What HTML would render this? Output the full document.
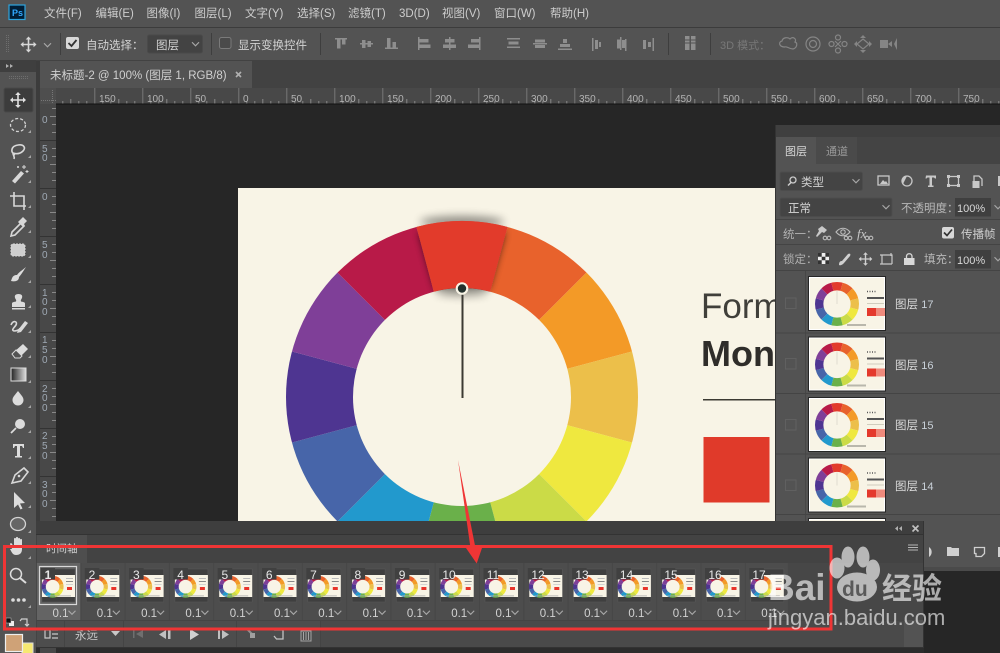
<!DOCTYPE html>
<html><head><meta charset="utf-8"><title>PS</title>
<style>
html,body{margin:0;padding:0;background:#262626;width:1000px;height:653px;overflow:hidden}
svg{display:block;filter:blur(.35px)}
text{font-family:"Liberation Sans","Noto Sans CJK SC",sans-serif}
.m{font-size:11.5px;fill:#cdcdcd}
.r{font-size:10px;fill:#b4b4b4}
.v{font-size:10px;fill:#9fa9b4}
.o{font-size:11.5px;fill:#d2d2d2}
.n{font-size:12px;fill:#e8e8e8}
.d{font-size:11.5px;fill:#d2d2d2}
.l{font-size:11.5px;fill:#d8d8d8}
.i{fill:none;stroke:#a8a8a8;stroke-width:1.4}
.g{fill:#8e8e8e}
.t{fill:none;stroke:#d8d8d8;stroke-width:1.6}
.f{fill:#d8d8d8}
</style></head><body>
<svg width="1000" height="653" viewBox="0 0 1000 653" xmlns="http://www.w3.org/2000/svg">
<defs>
<clipPath id="c176"><circle r="176"/></clipPath>
<filter id="b5" x="-40%" y="-40%" width="180%" height="180%"><feGaussianBlur stdDeviation="4"/></filter>
<filter id="b6" x="-50%" y="-300%" width="200%" height="700%"><feGaussianBlur stdDeviation="4.5"/></filter>
<pattern id="hr" patternUnits="userSpaceOnUse" x="46.3" y="88" width="48" height="16">
<path d="M.5 0V16" stroke="#777" fill="none"/>
<path d="M8.5 13V16M16.5 13V16M24.5 11V16M32.5 13V16M40.5 13V16" stroke="#888" fill="none"/>
</pattern>
<pattern id="vr" patternUnits="userSpaceOnUse" x="40" y="92" width="16" height="48">
<path d="M0 .5H16" stroke="#333" fill="none"/>
<path d="M12 8.5H16M12 16.5H16M10 24.5H16M12 32.5H16M12 40.5H16" stroke="#888" fill="none"/>
</pattern>
<g id="w">
<g clip-path="url(#c176)">
<path d="M0 0L-51.76-193.19H51.76z" fill="#e23b2b"/>
<path d="M0 0L51.76-193.19L141.42-141.42z" fill="#e8622c"/>
<path d="M0 0L141.42-141.42L193.19-51.76z" fill="#f39a27"/>
<path d="M0 0L193.19-51.76V51.76z" fill="#ecbf4a"/>
<path d="M0 0L193.19 51.76L141.42 141.42z" fill="#efe83f"/>
<path d="M0 0L141.42 141.42L51.76 193.19z" fill="#cbdb47"/>
<path d="M0 0L51.76 193.19H-51.76z" fill="#6ab04a"/>
<path d="M0 0L-51.76 193.19L-141.42 141.42z" fill="#2299cd"/>
<path d="M0 0L-141.42 141.42L-193.19 51.76z" fill="#4765a9"/>
<path d="M0 0L-193.19 51.76V-51.76z" fill="#4e3591"/>
<path d="M0 0L-193.19-51.76L-141.42-141.42z" fill="#7f3f98"/>
<path d="M0 0L-141.42-141.42L-51.76-193.19z" fill="#b81a48"/>
</g>
<circle r="109" fill="#f8f4e6"/>
</g>
<g id="fr">
<rect x="5" y="6" width="33" height="33" fill="#3f3f3f" stroke="#565656" stroke-width=".6"/>
<rect x="5" y="12" width="33" height="22" fill="#f8f4e6"/>
<use href="#w" transform="translate(15.6 23.7) scale(.0625)"/>
<rect x="29" y="15" width="7" height="1" fill="#bbb"/>
<rect x="29" y="18" width="7" height="1" fill="#888"/>
<rect x="29" y="21" width="7" height=".8" fill="#ccc"/>
<rect x="30" y="24" width="5" height="3" fill="#e8342a"/>
<rect x="10" y="32.5" width="24" height=".8" fill="#aaa"/>
<rect x="3.500" y="5" width="14.500" height="11.500" fill="#404040"/>
</g>
<g id="lt">
<rect x="-1" y="-1" width="78" height="55" fill="#262626"/>
<rect width="76" height="53" fill="#fff"/>
<rect x="1" y="1" width="74" height="51" fill="#f8f4e6"/>
<use href="#w" transform="translate(28 27) scale(.125)"/>
<rect x="27.5" y="14" width="1" height="13" fill="#e0ddd0"/>
<path d="M58 14.500h1M60.500 14.500h1M63 14.500h1M65.500 14.500h1" stroke="#555" stroke-width="1.500" fill="none"/>
<rect x="58" y="20" width="17" height="2" fill="#555"/>
<rect x="58" y="26" width="17" height="1" fill="#d0cdbd"/>
<rect x="58" y="31" width="9" height="8" fill="#e4392c"/>
<rect x="67" y="31" width="9" height="8" fill="#ef8a7c"/>
<rect x="38" y="47" width="19" height="2" fill="#b9b7ac"/>
</g>
<path id="tri" d="M0 3l3-3v3z" fill="#a5a5a5"/>
<g id="mv"><path d="M0-8l-2.800 3h5.600zM0 8l-2.800-3h5.600zM-8 0l3-2.800v5.600zM8 0l-3-2.800v5.600z"/><path d="M-.8-6h1.600V6h-1.600zM-6-.8H6v1.600H-6z"/></g>
<path id="chev" d="M-3.500-1.800L0 1.800L3.500-1.800" fill="none" stroke="#a8a8a8" stroke-width="1.100"/>
<linearGradient id="gd" x1="0" x2="1"><stop offset="0" stop-color="#222"/><stop offset="1" stop-color="#ddd"/></linearGradient>
</defs>

<!-- base -->
<rect width="1000" height="653" fill="#262626"/>
<rect width="1000" height="27" fill="#535353"/>
<rect y="27" width="1000" height="1" fill="#3c3c3c"/>
<rect y="28" width="1000" height="32" fill="#535353"/>
<rect y="60" width="1000" height="28" fill="#424242"/>
<rect x="40" y="61" width="212" height="27" fill="#535353"/>
<rect x="40" y="88" width="960" height="16" fill="#484848"/>
<rect x="40" y="88" width="960" height="16" fill="url(#hr)"/>
<rect x="40" y="88" width="16" height="16" fill="#4e4e4e"/>
<path d="M52.500 90V103M41 100.500H56" stroke="#777" stroke-dasharray="1 1" fill="none"/>
<rect x="56" y="103.500" width="944" height="1" fill="#111"/>
<rect x="36" y="61" width="4" height="592" fill="#3c3c3c"/>
<rect x="40" y="104" width="16" height="549" fill="#484848"/>
<rect x="40" y="104" width="16" height="549" fill="url(#vr)"/>

<!-- left toolbar -->
<rect y="60" width="36" height="593" fill="#535353"/>
<rect y="60" width="36" height="12" fill="#3f3f3f"/>
<path d="M6 64v4l3-2zM10 64v4l3-2z" fill="#b0b0b0"/>
<path d="M9 76.500H28M9 78.500H28" stroke="#6e6e6e" stroke-dasharray="1 1" fill="none"/>

<!-- menu -->
<rect x="9" y="5" width="16" height="14.500" fill="#001e36" stroke="#2ea4de" stroke-width="1.200"/>
<text x="12" y="16" font-size="9" font-weight="bold" fill="#31a8ff">Ps</text>
<text class="m" x="44" y="17">文件(F)</text>
<text class="m" x="95.500" y="17">编辑(E)</text>
<text class="m" x="146.500" y="17">图像(I)</text>
<text class="m" x="194.500" y="17">图层(L)</text>
<text class="m" x="245" y="17">文字(Y)</text>
<text class="m" x="297" y="17">选择(S)</text>
<text class="m" x="348" y="17">滤镜(T)</text>
<text class="m" x="399" y="17">3D(D)</text>
<text class="m" x="442" y="17">视图(V)</text>
<text class="m" x="494" y="17">窗口(W)</text>
<text class="m" x="550" y="17">帮助(H)</text>

<!-- options bar -->
<path d="M6.500 35V53M8.500 35V53" stroke="#6e6e6e" stroke-dasharray="1 1" fill="none"/>
<use href="#mv" transform="translate(28.500 44.500)" fill="#d8d8d8"/>
<use href="#chev" transform="translate(47.500 45)"/>
<rect x="60" y="33" width="1" height="22" fill="#3e3e3e"/>
<rect x="66" y="37" width="13" height="12" rx="2" fill="#d8d8d8"/>
<path d="M68.500 43l3 3 5-6" fill="none" stroke="#333" stroke-width="1.800"/>
<text class="o" x="86" y="49">自动选择：</text>
<rect x="147.500" y="35" width="55" height="18" rx="2" fill="#434343" stroke="#4a4a4a"/>
<text class="o" x="156" y="49">图层</text>
<use href="#chev" transform="translate(195.500 44)"/>
<rect x="211" y="33" width="1" height="22" fill="#3e3e3e"/>
<rect x="219.500" y="37.500" width="11.500" height="11" rx="2" fill="#4a4a4a" stroke="#7a7a7a"/>
<text class="o" x="238" y="49">显示变换控件</text>
<rect x="320" y="33" width="1" height="22" fill="#3e3e3e"/>
<g class="g">
<path d="M335 38h12v1.500h-12zM337 39.500h3.500v9h-3.500zM342 39.500h3.500v5h-3.500z"/>
<path d="M360 43h13v1.500h-13zM362 40h3.500v8h-3.500zM367.500 41h3.500v6h-3.500z"/>
<path d="M385 49h13v-1.500h-13zM387 38h3.500v9.500h-3.500zM392.500 42h3.500v5.500h-3.500z"/>
<path d="M418 37h1.500v13h-1.500zM419.500 39h9v3.500h-9zM419.500 44.500h11v3.500h-11z"/>
<path d="M449 37h1.500v13h-1.500zM445 39h9.500v3.500h-9.500zM443 44.500h13v3.500h-13z"/>
<path d="M479 37h1.500v13h-1.500zM471 39h8v3.500h-8zM468 44.500h11v3.500h-11z"/>
<path d="M507 38h13v1.500h-13zM508.500 41.500h10v3h-10zM507 46.500h13v1.500h-13z"/>
<path d="M533 43h14v1.500h-14zM535 39.500h10v3h-10zM535 45h10v3h-10z"/>
<path d="M558 48.500h14v1.500h-14zM560 44h10v3h-10zM563 39h4v4h-4z"/>
<path d="M592 38h1.500v13h-1.500zM595 40h3v9h-3zM599 42h2v5h-2z"/>
<path d="M620 37h1.500v13h-1.500zM617 39.500h3v9h-3zM625 39h1.500v12h-1.500zM622 40h3v8h-3z"/>
<path d="M654 38h-1.500v13h1.500zM643 40h3v9h-3zM648 42h3v5h-3z"/>
</g>
<rect x="668" y="33" width="1" height="22" fill="#3e3e3e"/>
<path class="g" d="M685 36h4.500v14h-4.500zM691 36h4.500v14h-4.500z"/>
<path d="M685 40h10.500M685 43h10.500" stroke="#535353" fill="none"/>
<rect x="710" y="33" width="1" height="22" fill="#3e3e3e"/>
<text x="720" y="49" font-size="11" fill="#787878">3D 模式：</text>
<g fill="none" stroke="#858585" stroke-width="1.200">
<path d="M785 47c-6 0-7-5-3-6c1-4 6-4 8-2c3-3 7 0 5 3c3 1 2 6-2 7c-4 0-6-3-8-2"/>
<circle cx="813" cy="44" r="7"/><circle cx="813" cy="44" r="3.500"/>
<circle cx="838" cy="37.500" r="2.500"/><circle cx="838" cy="50.500" r="2.500"/><circle cx="831.500" cy="44" r="2.500"/><circle cx="844.500" cy="44" r="2.500"/><path d="M835 41l6 6M841 41l-6 6"/>
<path d="M863 39l6 5-6 5-6-5z"/>
</g>
<path d="M863 35l3 3h-6zM863 53l3-3h-6zM854 44l3-3v6zM872 44l-3-3v6z" fill="#858585"/>
<rect x="880" y="40" width="8" height="8" fill="#858585"/>
<path d="M888 44l4-3v6zM897 38l-3 6 3 6" fill="#858585"/>

<!-- tab -->
<text x="50" y="79" font-size="11.500" fill="#d0d0d0">未标题-2 @ 100% (图层 1, RGB/8)</text>
<path d="M236 72l5 5M241 72l-5 5" stroke="#b0b0b0" stroke-width="1.600" fill="none"/>

<!-- rulers text -->
<g class="r">
<text x="99" y="102">150</text><text x="147" y="102">100</text><text x="195" y="102">50</text><text x="243" y="102">0</text><text x="291" y="102">50</text><text x="339" y="102">100</text><text x="387" y="102">150</text><text x="435" y="102">200</text><text x="483" y="102">250</text><text x="531" y="102">300</text><text x="579" y="102">350</text><text x="627" y="102">400</text><text x="675" y="102">450</text><text x="723" y="102">500</text><text x="771" y="102">550</text><text x="819" y="102">600</text><text x="867" y="102">650</text><text x="915" y="102">700</text><text x="963" y="102">750</text>
</g>
<g class="v">
<text x="42" y="123">0</text>
<text x="42" y="152">5</text><text x="42" y="161">0</text>
<text x="42" y="200">0</text>
<text x="42" y="248">5</text><text x="42" y="258">0</text>
<text x="42" y="296">1</text><text x="42" y="305">0</text><text x="42" y="315">0</text>
<text x="42" y="343">1</text><text x="42" y="353">5</text><text x="42" y="363">0</text>
<text x="42" y="392">2</text><text x="42" y="401">0</text><text x="42" y="411">0</text>
<text x="42" y="439">2</text><text x="42" y="449">5</text><text x="42" y="459">0</text>
<text x="42" y="488">3</text><text x="42" y="497">0</text><text x="42" y="507">0</text>
<text x="42" y="656">0</text>
</g>

<!-- document -->
<rect x="238" y="188" width="538" height="334" fill="#f8f4e6"/>
<ellipse cx="462" cy="222" rx="42" ry="6" fill="#000" opacity=".42" filter="url(#b6)"/>
<g transform="translate(462 397)">
<use href="#w"/>
</g>
<ellipse cx="462" cy="292" rx="26" ry="4" fill="#000" opacity=".38" filter="url(#b6)"/>
<path d="M419 232L505 232L489 288L435 288z" fill="#000" opacity=".75" filter="url(#b5)"/>
<path d="M416.500 227A176 176 0 0 1 507.500 227L490.200 291.700A109 109 0 0 0 433.800 291.700z" fill="#e23b2b"/>
<rect x="461.500" y="290" width="2" height="108" fill="#3c3a33"/>
<circle cx="462" cy="288.500" r="6.300" fill="#f8f4e6"/>
<circle cx="462" cy="288.500" r="4.200" fill="#22302c"/>
<text x="701" y="318" font-size="35" fill="#403f3a">Form</text>
<text x="701" y="366" font-size="36" font-weight="bold" fill="#2f2d2a">Mon</text>
<rect x="703" y="399" width="73" height="1.500" fill="#3c3a33"/>
<rect x="703.500" y="437" width="66" height="65.500" fill="#e03a2a"/>

<!-- layers panel -->
<rect x="775" y="125" width="225" height="400" fill="#535353"/>
<rect x="775" y="125" width="1" height="400" fill="#333"/>
<rect x="776" y="125" width="224" height="12" fill="#3f3f3f"/>
<rect x="776" y="137" width="224" height="27" fill="#444"/>
<rect x="776" y="137" width="40" height="27" fill="#535353"/>
<rect x="816" y="137" width="41" height="27" fill="#4a4a4a"/>
<text x="785" y="155" font-size="11" fill="#d8d8d8">图层</text>
<text x="826" y="155" font-size="11" fill="#9a9a9a">通道</text>
<rect x="780" y="172" width="82.500" height="18.500" rx="2" fill="#444" stroke="#4c4c4c"/>
<circle cx="793" cy="180" r="3" fill="none" stroke="#ccc" stroke-width="1.300"/>
<path d="M791 182.500l-3 3" stroke="#ccc" stroke-width="1.500"/>
<text x="801" y="186" font-size="11.500" fill="#d2d2d2">类型</text>
<use href="#chev" transform="translate(856 181)"/>
<g fill="none" stroke="#c8c8c8" stroke-width="1.300">
<rect x="878" y="176" width="11" height="9"/>
<circle cx="907" cy="181" r="5"/>
<rect x="948.500" y="176.500" width="10" height="9"/>
<path d="M974 186v-10h5l3 3v7"/>
</g>
<path d="M880 184l3-4 2 2 1-1 2 3zM907 176a5 5 0 0 0-4 8zM926 175.500h10v3h-1l-1-1h-2v8h1.500v1.500h-5.500v-1.500h1.500v-8h-2l-1 1h-1z" fill="#c8c8c8"/>
<path d="M947 175h3v3h-3zM957 175h3v3h-3zM947 184h3v3h-3zM957 184h3v3h-3z" fill="#c8c8c8"/>
<rect x="972.500" y="181" width="7" height="7" fill="#c8c8c8"/>
<rect x="998" y="176" width="2" height="10" fill="#c8c8c8"/>

<rect x="780" y="198" width="112" height="18.500" rx="2" fill="#444" stroke="#4c4c4c"/>
<text x="788" y="212" font-size="11.500" fill="#d8d8d8">正常</text>
<use href="#chev" transform="translate(886 207)"/>
<text x="901" y="212" font-size="11.500" fill="#b8b8b8">不透明度：</text>
<rect x="955" y="198" width="36" height="18.500" fill="#3f3f3f"/>
<text x="957" y="212" font-size="11" fill="#d8d8d8">100%</text>
<use href="#chev" transform="translate(998 207)"/>
<rect x="776" y="219" width="224" height="1" fill="#444"/>

<text x="783" y="238" font-size="11.500" fill="#b0b0b0">统一：</text>
<path d="M816 236l3-5-1-2 4-3 5 4-3 3-2-1-5 5z" fill="#c8c8c8"/>
<g fill="none" stroke="#bcbcbc" stroke-width="1.100">
<circle cx="825" cy="238" r="1.800"/><circle cx="829" cy="238" r="1.800"/>
<path d="M836 232c4-5 10-5 14 0c-4 5-10 5-14 0z"/><circle cx="843" cy="232" r="2.200"/>
<circle cx="846" cy="238" r="1.800"/><circle cx="850" cy="238" r="1.800"/>
<circle cx="867" cy="238" r="1.800"/><circle cx="871" cy="238" r="1.800"/>
</g>
<text x="857" y="238" font-size="13" font-style="italic" style="font-family:'Liberation Serif',serif" fill="#c8c8c8">fx</text>
<rect x="942" y="227" width="12" height="11.500" rx="2" fill="#d8d8d8"/>
<path d="M944 232.500l3 3 5-6" fill="none" stroke="#333" stroke-width="1.700"/>
<text x="961" y="238" font-size="11.500" fill="#d0d0d0">传播帧</text>
<rect x="776" y="244" width="224" height="1" fill="#444"/>

<text x="783" y="263" font-size="11.500" fill="#b0b0b0">锁定：</text>
<rect x="818" y="253" width="11" height="11" fill="#eee"/>
<path d="M818 253h3.700v3.700h-3.700zM825.400 253h3.600v3.700h-3.600zM821.700 256.700h3.700v3.600h-3.700zM818 260.300h3.700v3.700h-3.700zM825.400 260.300h3.600v3.700h-3.600z" fill="#333"/>
<path d="M839 265c0-4 2-4 3-4l6-7c2-1 3 0 2 2l-6 7c-1 1-3 3-5 2z" fill="#d0d0d0"/>
<use href="#mv" transform="translate(865.500 259) scale(.85)" fill="#d0d0d0"/>
<path d="M882 255h10v9M882 255v9h10M880 255h3M880 264h3M891 253v3" fill="none" stroke="#c8c8c8" stroke-width="1.200"/>
<path d="M904 258h10.500v7h-10.500z" fill="#d8d8d8"/>
<path d="M906.500 258v-2a2.800 2.800 0 0 1 5.500 0v2" fill="none" stroke="#d8d8d8" stroke-width="1.300"/>
<text x="924" y="263" font-size="11.500" fill="#b8b8b8">填充：</text>
<rect x="955" y="250" width="36" height="18.500" fill="#3f3f3f"/>
<text x="957" y="264" font-size="11" fill="#d8d8d8">100%</text>
<use href="#chev" transform="translate(998 259)"/>
<rect x="776" y="270" width="224" height="1" fill="#444"/>

<path d="M805.500 271V525" stroke="#474747" fill="none"/>
<path d="M776 333h224M776 393.500h224M776 454h224M776 514.500h224" stroke="#444" fill="none"/>
<g fill="none" stroke="#606060">
<rect x="785.500" y="298" width="10.500" height="10.500"/>
<rect x="785.500" y="358.500" width="10.500" height="10.500"/>
<rect x="785.500" y="419.500" width="10.500" height="10.500"/>
<rect x="785.500" y="480" width="10.500" height="10.500"/>
</g>
<use href="#lt" transform="translate(809 277)"/>
<use href="#lt" transform="translate(809 337.500)"/>
<use href="#lt" transform="translate(809 398)"/>
<use href="#lt" transform="translate(809 458.500)"/>
<use href="#lt" transform="translate(809 519)"/>
<text class="l" x="895" y="308">图层 <tspan font-size="11" fill="#c8d0d8">17</tspan></text>
<text class="l" x="895" y="369">图层 <tspan font-size="11" fill="#c8d0d8">16</tspan></text>
<text class="l" x="895" y="429">图层 <tspan font-size="11" fill="#c8d0d8">15</tspan></text>
<text class="l" x="895" y="490">图层 <tspan font-size="11" fill="#c8d0d8">14</tspan></text>

<!-- layers bottom bar -->
<rect x="923" y="521" width="77" height="46" fill="#535353"/>
<rect x="923" y="567" width="77" height="4" fill="#4a4a4a"/>
<rect x="923" y="571" width="77" height="82" fill="#262626"/>
<path d="M923 556a6 6 0 0 0 7-9a6 6 0 0 1-7 9z" fill="#d0d0d0"/>
<path d="M929 547a6 6 0 0 1 0 10z" fill="#d0d0d0"/>
<path d="M947 547h4l1 1h7v8h-12z" fill="#d0d0d0"/>
<path d="M974.500 547.500h10v6l-3 3h-5.500v-3h-1.500z" fill="none" stroke="#d0d0d0" stroke-width="1.300"/>
<rect x="998" y="547" width="2" height="10" fill="#d0d0d0"/>

<!-- timeline panel -->
<rect x="36" y="521" width="887" height="126" fill="#4a4a4a"/>
<rect x="36" y="521" width="887" height="13" fill="#3e3e3e"/>
<rect x="36" y="534" width="887" height="1" fill="#333"/>
<rect x="36" y="535" width="887" height="28" fill="#434343"/>
<rect x="37" y="535" width="50" height="28" fill="#4e4e4e"/>
<rect x="923" y="521" width="1" height="126" fill="#333"/>
<rect x="36" y="647" width="888" height="1" fill="#333"/>
<rect x="36" y="648" width="888" height="5" fill="#2c2c2c"/>
<rect x="40" y="648" width="16" height="5" fill="#484848"/>
<path d="M898 526l-3 2.500 3 2.500zM902 526l-3 2.500 3 2.500z" fill="#b0b0b0"/>
<path d="M912.500 525.500l6 6M918.500 525.500l-6 6" stroke="#c0c0c0" stroke-width="1.600" fill="none"/>
<path d="M908 545h10M908 547.500h10M908 550h10" stroke="#b4b4b4" fill="none"/>
<text x="46" y="552" font-size="10.500" fill="#d0d0d0">时间轴</text>
<rect x="36" y="563" width="887" height="57" fill="#474747"/>

<!-- frames backgrounds -->
<g fill="#4d4d4d">
<rect x="81.300" y="563" width="43.300" height="57"/><rect x="125.600" y="563" width="43.300" height="57"/><rect x="169.900" y="563" width="43.300" height="57"/><rect x="214.200" y="563" width="43.300" height="57"/><rect x="258.500" y="563" width="43.300" height="57"/><rect x="302.800" y="563" width="43.300" height="57"/><rect x="347.100" y="563" width="43.300" height="57"/><rect x="391.400" y="563" width="43.300" height="57"/><rect x="435.700" y="563" width="43.300" height="57"/><rect x="480" y="563" width="43.300" height="57"/><rect x="524.300" y="563" width="43.300" height="57"/><rect x="568.600" y="563" width="43.300" height="57"/><rect x="612.900" y="563" width="43.300" height="57"/><rect x="657.200" y="563" width="43.300" height="57"/><rect x="701.500" y="563" width="43.300" height="57"/><rect x="745.800" y="563" width="42" height="57"/>
</g>
<rect x="37" y="563" width="43.300" height="57" fill="#646464"/>
<use href="#fr" transform="translate(37 563)"/>
<rect x="39.500" y="566.500" width="37" height="38" fill="none" stroke="#d8d8d8" stroke-width="1.200"/>
<use href="#fr" transform="translate(81.300 563)"/>
<use href="#fr" transform="translate(125.600 563)"/>
<use href="#fr" transform="translate(169.900 563)"/>
<use href="#fr" transform="translate(214.200 563)"/>
<use href="#fr" transform="translate(258.500 563)"/>
<use href="#fr" transform="translate(302.800 563)"/>
<use href="#fr" transform="translate(347.100 563)"/>
<use href="#fr" transform="translate(391.400 563)"/>
<use href="#fr" transform="translate(435.700 563)"/>
<use href="#fr" transform="translate(480 563)"/>
<use href="#fr" transform="translate(524.300 563)"/>
<use href="#fr" transform="translate(568.600 563)"/>
<use href="#fr" transform="translate(612.900 563)"/>
<use href="#fr" transform="translate(657.200 563)"/>
<use href="#fr" transform="translate(701.500 563)"/>
<use href="#fr" transform="translate(745.800 563)"/>
<g class="n" text-anchor="middle">
<text x="48" y="579" font-weight="bold">1</text><text x="92" y="579">2</text><text x="136.300" y="579">3</text><text x="180.600" y="579">4</text><text x="224.900" y="579">5</text><text x="269.200" y="579">6</text><text x="313.500" y="579">7</text><text x="357.800" y="579">8</text><text x="402.100" y="579">9</text><text x="449" y="579">10</text><text x="493" y="579">11</text><text x="538" y="579">12</text><text x="582" y="579">13</text><text x="626.500" y="579">14</text><text x="671" y="579">15</text><text x="715" y="579">16</text><text x="759" y="579">17</text>
</g>
<g class="d">
<text x="52.500" y="617">0.1</text><text x="96.800" y="617">0.1</text><text x="141.100" y="617">0.1</text><text x="185.400" y="617">0.1</text><text x="229.700" y="617">0.1</text><text x="274" y="617">0.1</text><text x="318.300" y="617">0.1</text><text x="362.600" y="617">0.1</text><text x="406.900" y="617">0.1</text><text x="451.200" y="617">0.1</text><text x="495.500" y="617">0.1</text><text x="539.800" y="617">0.1</text><text x="584.100" y="617">0.1</text><text x="628.400" y="617">0.1</text><text x="672.700" y="617">0.1</text><text x="717" y="617">0.1</text><text x="761.300" y="617">0.1</text>
</g>
<g>
<use href="#chev" transform="translate(72 612.500)"/><use href="#chev" transform="translate(116.300 612.500)"/><use href="#chev" transform="translate(160.600 612.500)"/><use href="#chev" transform="translate(204.900 612.500)"/><use href="#chev" transform="translate(249.200 612.500)"/><use href="#chev" transform="translate(293.500 612.500)"/><use href="#chev" transform="translate(337.800 612.500)"/><use href="#chev" transform="translate(382.100 612.500)"/><use href="#chev" transform="translate(426.400 612.500)"/><use href="#chev" transform="translate(470.700 612.500)"/><use href="#chev" transform="translate(515 612.500)"/><use href="#chev" transform="translate(559.300 612.500)"/><use href="#chev" transform="translate(603.600 612.500)"/><use href="#chev" transform="translate(647.900 612.500)"/><use href="#chev" transform="translate(692.200 612.500)"/><use href="#chev" transform="translate(736.500 612.500)"/><use href="#chev" transform="translate(780.800 612.500)"/>
</g>

<!-- timeline controls -->
<rect x="36" y="620" width="887" height="27" fill="#444"/>
<rect x="37" y="621" width="27" height="26" fill="#4d4d4d"/>
<rect x="65" y="621" width="58" height="26" fill="#4d4d4d"/>
<rect x="124" y="621" width="112" height="26" fill="#4d4d4d"/>
<rect x="237" y="621" width="83" height="26" fill="#4d4d4d"/>
<rect x="321" y="621" width="583" height="26" fill="#4a4a4a"/>
<rect x="904" y="620" width="19" height="27" fill="#535353"/>
<path d="M45 630h5v8h-5zM52 630h6M52 634h6M52 638h6" fill="none" stroke="#c8c8c8" stroke-width="1.200"/>
<text x="75" y="639" font-size="11.500" fill="#c8c8c8">永远</text>
<path d="M111 631h9l-4.500 5z" fill="#c8c8c8"/>
<path d="M133 630v8h1.500v-8zM143 630v8l-7-4z" fill="#6f6f6f"/>
<path d="M166 630v9l-7-4.500zM168 630h2.500v9h-2.500z" fill="#c0c0c0"/>
<path d="M190 629l9 5.500-9 5.500z" fill="#d0d0d0"/>
<path d="M218 630h2v9h-2zM222 630l7 4.500-7 4.500z" fill="#c0c0c0"/>
<path d="M247 629l5 5" stroke="#8f8f8f" stroke-width="2" fill="none"/><rect x="250" y="633" width="5" height="5" fill="#a0a0a0"/>
<path d="M274 630h9v9h-6.500l-2.500-3" fill="none" stroke="#c4c4c4" stroke-width="1.300"/>
<path d="M301 631h10v10h-10zM303.500 632v8M306 632v8M308.500 632v8M300 630h12" fill="none" stroke="#a4a4a4" stroke-width="1"/>

<!-- tool icons -->
<rect x="4" y="88" width="29" height="24" rx="2" fill="#3c3c3c" stroke="#484848"/>
<use href="#mv" transform="translate(18 100)" fill="#e0e0e0"/>
<ellipse cx="18" cy="125" rx="7.500" ry="6.500" fill="none" stroke="#d4d4d4" stroke-width="1.300" stroke-dasharray="3 2"/>
<use href="#tri" x="28" y="130"/>
<path class="t" d="M15 155c-5-3-4-9 3-10c6-1 8 3 5 6c-3 3-7 3-10 2c0 3 2 3 1 6"/>
<use href="#tri" x="28" y="155"/>
<path d="M12 181l9-10 3 2.500-9 10z" fill="#d8d8d8"/>
<path d="M24 165v4M22 167h4M27 170v3M25.500 171.500h3M18 166v2M17 167h2" stroke="#d8d8d8" fill="none"/>
<use href="#tri" x="28" y="180"/>
<path class="t" d="M14 192v14h12M10 196h14v14" stroke-width="1.800"/>
<use href="#tri" x="28" y="205"/>
<path class="t" d="M12 232l9-9 3 3-9 9-4 1z"/>
<path d="M20 220l3-3 4 4-3 3 1 2-2 1-5-5z" fill="#d8d8d8"/>
<use href="#tri" x="28" y="230"/>
<rect x="11" y="244" width="14" height="12" rx="2" fill="#cfcfcf" stroke="#d8d8d8" stroke-dasharray="2 1"/>
<use href="#tri" x="28" y="255"/>
<path d="M26 267c-2 2-7 5-9 8c-5 0-5 4-6 6c4 1 8 0 8-4c2-2 5-7 7-10z" fill="#dcdcdc"/>
<use href="#tri" x="28" y="280"/>
<path d="M12 307h13v-3.500c0-1-1-1.500-4-2c-1-2 2-3 1-6c-1-2-6-2-7 0c-1 3 2 4 1 6c-3 .500-4 1-4 2z" fill="#dcdcdc"/>
<rect x="12" y="308" width="13" height="1.500" fill="#dcdcdc"/>
<use href="#tri" x="28" y="305"/>
<path class="t" d="M11 325c2-5 7-4 5 0c-2 3-5 5-2 6c2 0 6-1 6-3"/>
<path d="M18 330l7-9 3 2-7 9-4 1z" fill="#d8d8d8"/>
<use href="#tri" x="28" y="330"/>
<path d="M14 352l9-8 5 5-8 8h-4z" fill="#dcdcdc"/><path d="M12 354l4-4 6 6-2 2h-5z" fill="#535353" stroke="#d8d8d8"/>
<use href="#tri" x="28" y="355"/>
<rect x="11" y="368" width="15" height="13" fill="url(#gd)" stroke="#ddd"/>
<use href="#tri" x="28" y="380"/>
<path d="M18 391c3 4 5.500 6 5.500 9a5.500 5.500 0 0 1-11 0c0-3 2.500-5 5.500-9z" fill="#dcdcdc"/>
<use href="#tri" x="28" y="405"/>
<circle cx="20" cy="424" r="5" fill="#dcdcdc"/><path d="M16 428l-5 5" stroke="#dcdcdc" stroke-width="1.800"/>
<use href="#tri" x="28" y="430"/>
<path d="M13 444h11v4h-1l-1-2h-2v10h2v1.500h-7V456h2V446h-2l-1 2h-1z" fill="#dcdcdc"/>
<use href="#tri" x="28" y="456"/>
<path class="t" d="M12 483l3-8 9-7 4 4-7 9z"/><circle cx="19" cy="476" r="1.300" fill="#d8d8d8"/>
<use href="#tri" x="28" y="481"/>
<path d="M14 492l11 11-5 .500 2.500 5-2 1-2.500-5-4 3.500z" fill="#dcdcdc"/>
<use href="#tri" x="28" y="505"/>
<ellipse cx="18" cy="524" rx="7.500" ry="6.500" fill="#666" stroke="#d4d4d4" stroke-width="1.300"/>
<use href="#tri" x="28" y="530"/>
<path d="M12 549l-2-5c0-1 2-1 2 0l2 3v-8c0-1.500 2-1.500 2 0v5-6c0-1.500 2-1.500 2 0v6-5c0-1.500 2-1.500 2 0v5-4c0-1.500 2-1.500 2 0v9c0 4-2 6-6 6c-3 0-4-2-6-6z" fill="#dcdcdc"/>
<use href="#tri" x="28" y="556"/>
<circle cx="16" cy="574" r="5.500" fill="none" stroke="#dcdcdc" stroke-width="1.500"/><path d="M20 578l6 5" stroke="#dcdcdc" stroke-width="2"/>
<circle cx="13" cy="600" r="1.800" fill="#dcdcdc"/><circle cx="18.500" cy="600" r="1.800" fill="#dcdcdc"/><circle cx="24" cy="600" r="1.800" fill="#dcdcdc"/>
<use href="#tri" x="28" y="605"/>
<rect x="9" y="621" width="5" height="5" fill="#eee"/><rect x="6" y="618" width="5" height="5" fill="#111" stroke="#ccc" stroke-width=".5"/>
<path d="M22 619h5v6M20 621l2-2.500M25 624l2 2 2-2" fill="none" stroke="#d0d0d0" stroke-width="1.200"/>
<rect x="22" y="643" width="11" height="11" fill="#f6e871" stroke="#ddd"/>
<rect x="5.500" y="634.500" width="17" height="17" fill="#cfa277" stroke="#eee" stroke-width="1.200"/>

<!-- red annotation -->
<rect x="4.500" y="546.500" width="826.500" height="82.500" fill="none" stroke="#ef3535" stroke-width="3"/>
<path d="M458 460L470.500 548H466L476.700 563.500L482 548H475.500z" fill="#ef3535"/>

<!-- watermark -->
<g fill="#fff" opacity=".62">
<text x="768" y="600" font-size="37" font-weight="bold">Bai</text>
<ellipse cx="848" cy="557" rx="6.500" ry="10.500"/>
<ellipse cx="863" cy="557" rx="6.500" ry="10.500"/>
<ellipse cx="837" cy="568" rx="7.500" ry="10.500"/>
<ellipse cx="873" cy="570" rx="7" ry="10.500"/>
<ellipse cx="857" cy="587" rx="20" ry="14.500"/>
<text x="882" y="599" font-size="30" font-weight="bold">经验</text>
<text x="768" y="625" font-size="22">jingyan.baidu.com</text>
</g>
<text x="842" y="596" font-size="21" font-weight="bold" fill="#5a5a5a">du</text>
</svg>
</body></html>
